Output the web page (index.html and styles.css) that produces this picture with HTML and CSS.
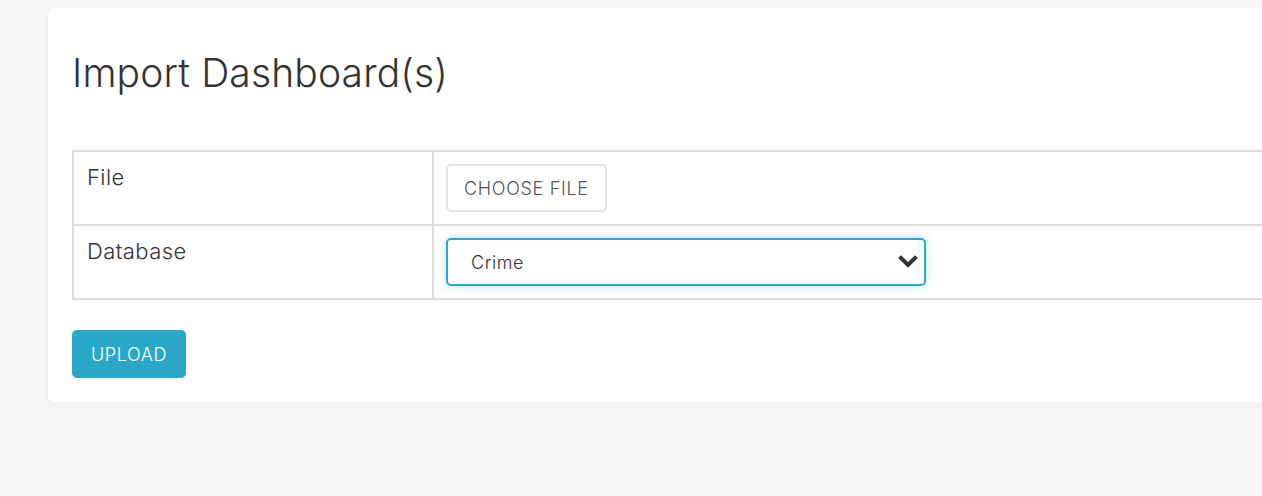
FILE: index.html
```html
<!DOCTYPE html>
<html lang="en">
<head>
<meta charset="utf-8">
<title>Import Dashboard(s)</title>
<link rel="stylesheet" href="styles.css">
</head>
<body>
<div class="page">
  <div class="card">
    <h1 class="title">Import Dashboard(s)</h1>
    <table class="form-table">
      <tr>
        <td class="label-cell">File</td>
        <td class="field-cell"><button class="btn-file" type="button">CHOOSE FILE</button></td>
      </tr>
      <tr>
        <td class="label-cell">Database</td>
        <td class="field-cell">
          <div class="select">
            <span class="select-value">Crime</span>
            <svg class="chevron" width="20" height="14" viewBox="0 0 20 14"><polyline points="3,3 10,10 17,3" fill="none" stroke="#333" stroke-width="4" stroke-linecap="square"/></svg>
          </div>
        </td>
      </tr>
    </table>
    <button class="btn-upload" type="button">UPLOAD</button>
  </div>
</div>
</body>
</html>
```
FILE: styles.css
```css
html, body {
  margin: 0;
  padding: 0;
  background: #f5f5f5;
  font-family: Inter, "Noto Sans", sans-serif;
  color: #333;
  overflow: hidden;
}
.page {
  padding: 8px 0 0 48px;
}
.card {
  background: #fff;
  border-radius: 5px;
  box-shadow: 0 1px 3px rgba(0,0,0,0.08);
  margin-right: -60px;
  padding: 24px 24px 24px 24px;
}
.title {
  margin: 16px 0 0 0;
  font-size: 39px;
  font-weight: 350;
  line-height: 50px;
  color: #333;
  letter-spacing: 0.15px;
}
.form-table {
  margin-top: 52px;
  width: 100%;
  border-collapse: collapse;
}
.form-table td {
  border: 2px solid #ddd;
  vertical-align: top;
  padding: 12px 12px;
  height: 72px;
  box-sizing: border-box;
}
.label-cell {
  width: 360px;
  font-size: 22px;
  font-weight: 350;
  letter-spacing: 0.4px;
  padding-left: 13px !important;
  padding-top: 12px !important;
  line-height: 26px;
}
.btn-file {
  font-family: inherit;
  font-size: 18px;
  font-weight: 350;
  color: #555;
  background: #fff;
  border: 2px solid #e2e2e2;
  border-radius: 5px;
  height: 48px;
  padding: 0 16px;
  letter-spacing: 0.7px;
}
.select {
  width: 480px;
  height: 48px;
  box-sizing: border-box;
  border: 2px solid #2ba6c6;
  border-radius: 5px;
  box-shadow: 0 0 8px rgba(43,166,198,0.35);
  display: flex;
  align-items: center;
  justify-content: space-between;
  padding: 0 6px 0 23px;
  font-size: 18px;
  font-weight: 350;
  letter-spacing: 0.6px;
  color: #333;
}
.chevron {
  display: block;
}
.btn-upload {
  margin-top: 30px;
  font-family: inherit;
  font-size: 18px;
  font-weight: 350;
  color: #fff;
  background: #2ba8c8;
  border: none;
  border-radius: 5px;
  height: 48px;
  padding: 0 19px;
  letter-spacing: 0.6px;
}
```
